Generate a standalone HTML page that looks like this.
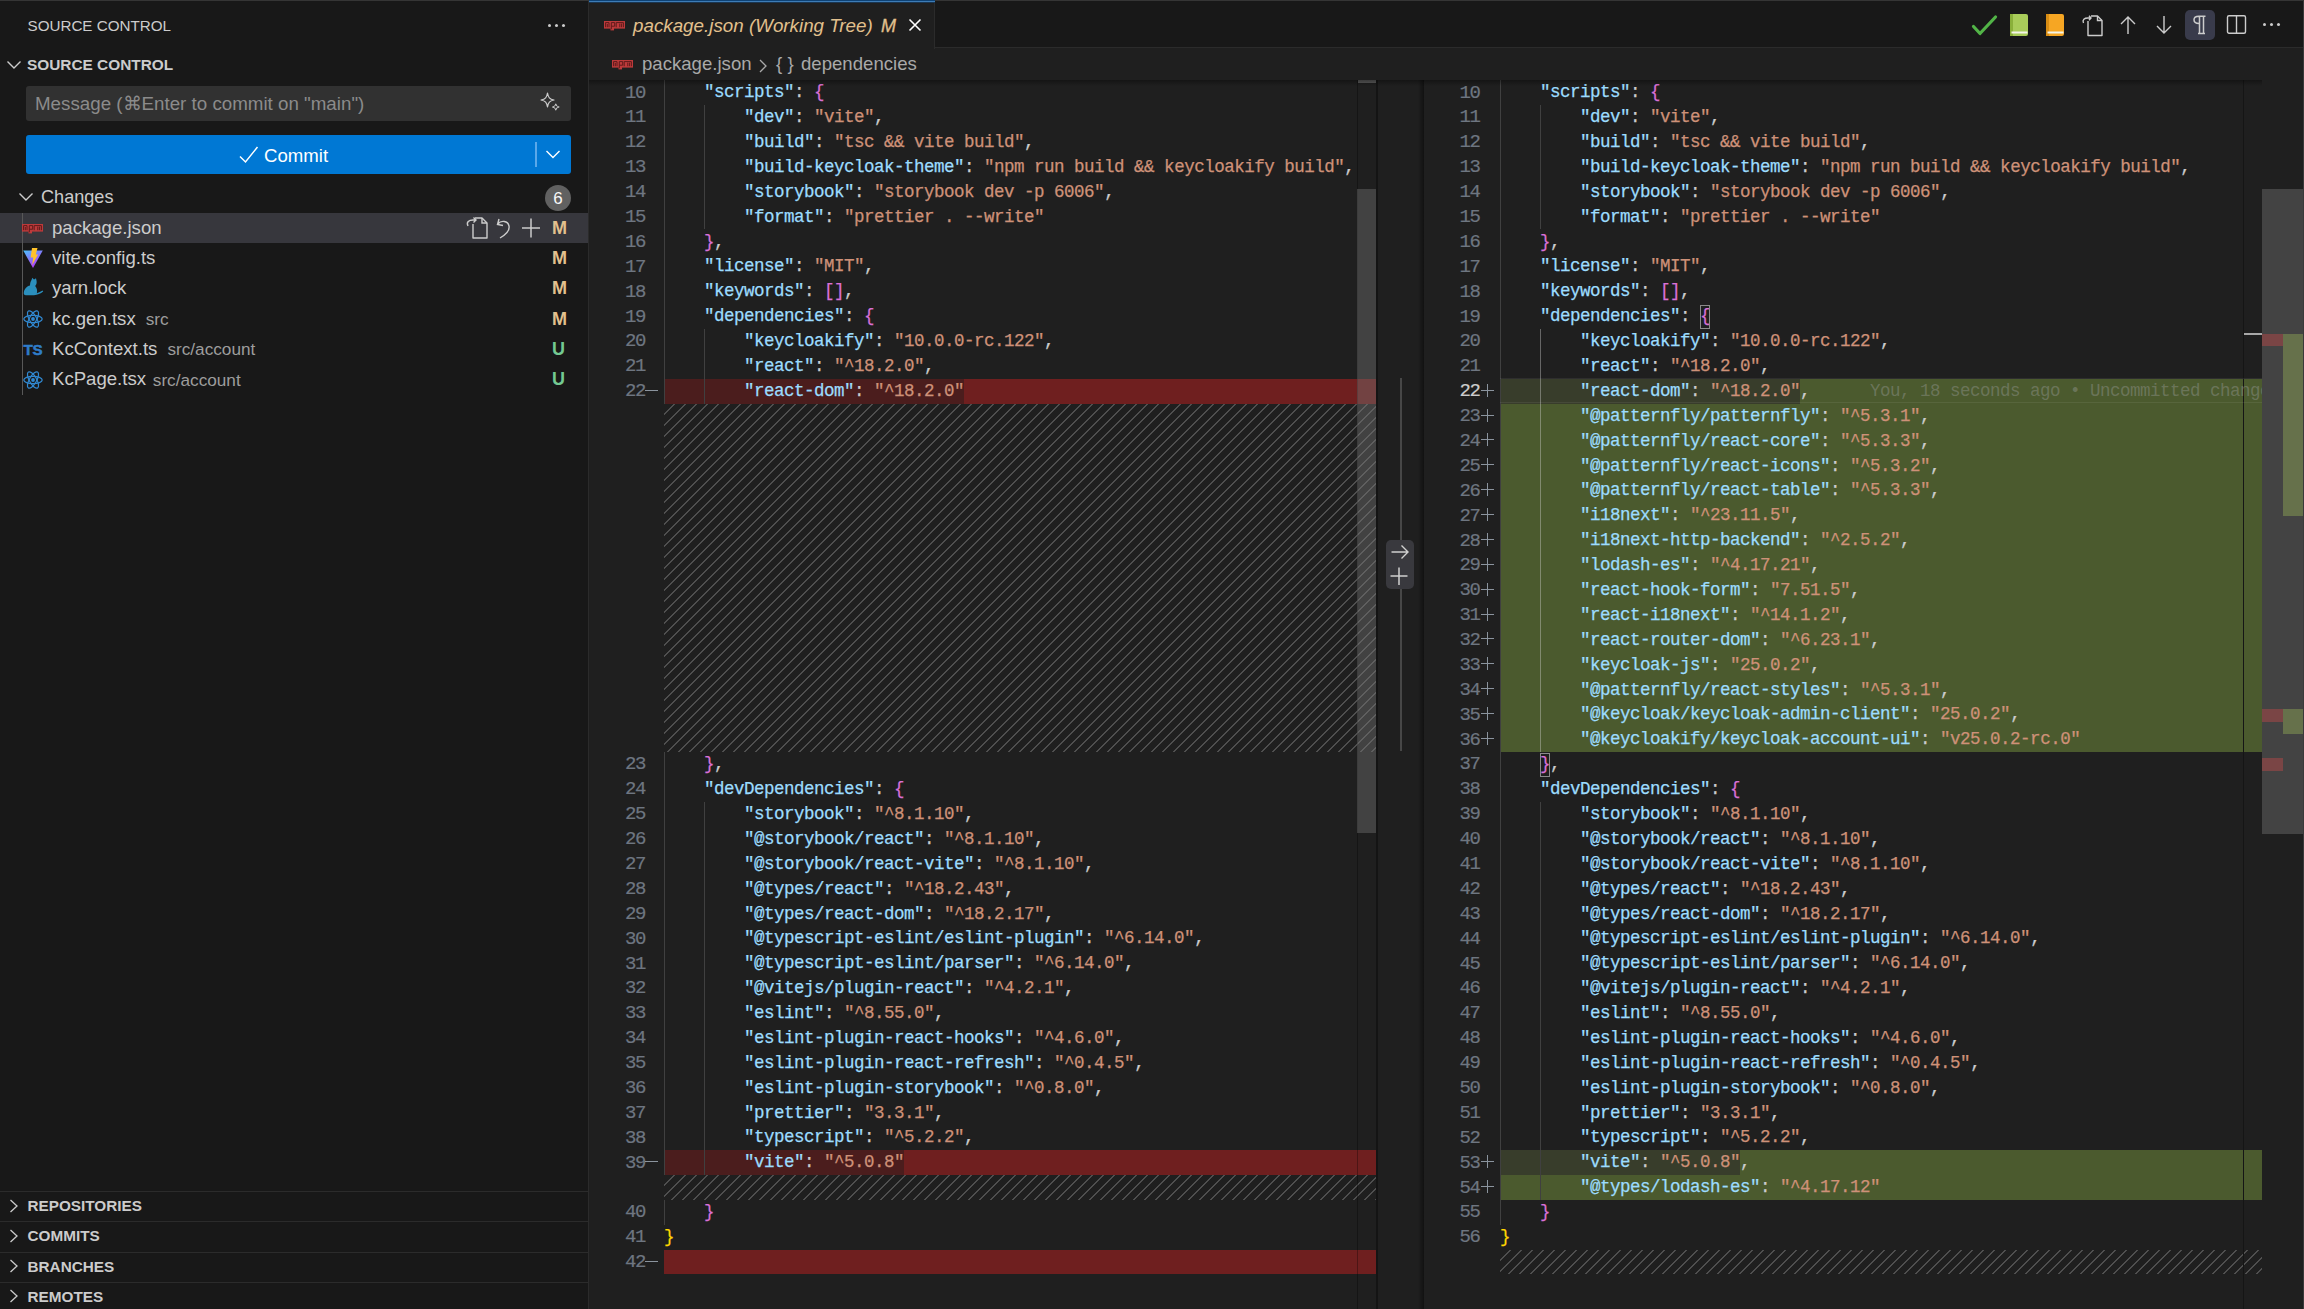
<!DOCTYPE html>
<html><head><meta charset="utf-8">
<style>
*{box-sizing:border-box;margin:0;padding:0}
html,body{width:2304px;height:1309px;overflow:hidden;background:#1f1f1f}
body{position:relative;font-family:"Liberation Sans",sans-serif;color:#cccccc}
.abs{position:absolute}
.t{position:absolute;white-space:pre;line-height:30px}
#side{position:absolute;left:0;top:0;width:588px;height:1309px;background:#181818}
#sideb{position:absolute;left:588px;top:0;width:1px;height:1309px;background:#2b2b2b}
.code{position:absolute;white-space:pre;font-family:"Liberation Mono",monospace;font-size:17.5px;letter-spacing:-0.5px;line-height:24.885px;height:24.885px;padding-top:0.3px;-webkit-text-stroke:0.25px currentColor}
.ln{position:absolute;width:60px;text-align:right;white-space:pre;font-family:"Liberation Mono",monospace;font-size:19px;letter-spacing:-1.4px;line-height:24.885px;padding-top:0.6px;color:#6e7681;-webkit-text-stroke:0.2px currentColor}
.ln.act{color:#cccccc}
.sign{position:absolute;white-space:pre;font-family:"Liberation Mono",monospace;font-size:17.5px;line-height:24.885px;padding-top:1px;color:#6e7681}
.bg{position:absolute}
.guide{position:absolute;width:1px}
.hatch{position:absolute;background-image:linear-gradient(-45deg, rgba(204,204,204,0.28) 9%, transparent 9%, transparent 50%, rgba(204,204,204,0.28) 50%, rgba(204,204,204,0.28) 59%, transparent 59%, transparent 100%);background-size:11px 11px}
.clipL{position:absolute;left:589px;top:80px;width:787px;height:1229px;overflow:hidden}
.clipR{position:absolute;left:1424px;top:80px;width:838px;height:1229px;overflow:hidden}
.inner{position:absolute;top:-80px}
</style></head><body>
<!-- SIDEBAR -->
<div id="side"></div>
<div id="sideb"></div>
<div class="abs" style="left:0;top:0;width:589px;height:1px;background:#353535;z-index:5"></div><div class="abs" style="left:935px;top:0;width:1369px;height:1px;background:#353535;z-index:5"></div>
<div class="t" style="left:27.5px;top:10.5px;font-size:15.2px;color:#cccccc">SOURCE CONTROL</div>
<div class="abs" style="left:548px;top:23.5px;width:3.2px;height:3.2px;border-radius:2px;background:#cccccc;box-shadow:7px 0 0 #cccccc,14px 0 0 #cccccc"></div>
<svg class="abs" style="left:6px;top:59px" width="16" height="12" viewBox="0 0 16 12"><path d="M1.5 2.5 L8 9 L14.5 2.5" fill="none" stroke="#cccccc" stroke-width="1.4"/></svg>
<div class="t" style="left:27px;top:50px;font-size:15.4px;font-weight:bold;color:#cccccc">SOURCE CONTROL</div>
<div class="abs" style="left:26px;top:86px;width:545px;height:35px;background:#313131;border-radius:3px"></div>
<div class="t" style="left:35px;top:89px;font-size:18.75px;color:#8b8b8b">Message (⌘Enter to commit on "main")</div>
<svg class="abs" style="left:538px;top:91px" width="24" height="24" viewBox="0 0 24 24"><path d="M9.5 2 C10.3 6.5 11.5 8 16 9 C11.5 10 10.3 11.5 9.5 16 C8.7 11.5 7.5 10 3 9 C7.5 8 8.7 6.5 9.5 2 Z" fill="none" stroke="#cccccc" stroke-width="1.2" stroke-linejoin="round"/><path d="M17.8 13 C18.2 15 18.8 15.6 21 16 C18.8 16.4 18.2 17 17.8 19 C17.4 17 16.8 16.4 14.6 16 C16.8 15.6 17.4 15 17.8 13 Z" fill="none" stroke="#cccccc" stroke-width="1.1" stroke-linejoin="round"/></svg>
<div class="abs" style="left:26px;top:135px;width:545px;height:39px;background:#0078d4;border-radius:3px"></div>
<svg class="abs" style="left:238px;top:145px" width="22" height="19" viewBox="0 0 22 19"><path d="M2 11.5 L7.5 17 L19.5 2" fill="none" stroke="#ffffff" stroke-width="1.5"/></svg>
<div class="t" style="left:264px;top:140.5px;font-size:18.6px;color:#ffffff">Commit</div>
<div class="abs" style="left:535px;top:142px;width:2px;height:25px;background:#5aa8ea"></div>
<svg class="abs" style="left:545px;top:148px" width="16" height="12" viewBox="0 0 16 12"><path d="M1.5 3 L8 9.5 L14.5 3" fill="none" stroke="#ffffff" stroke-width="1.4"/></svg>
<svg class="abs" style="left:18px;top:191px" width="16" height="12" viewBox="0 0 16 12"><path d="M1.5 2.5 L8 9 L14.5 2.5" fill="none" stroke="#cccccc" stroke-width="1.4"/></svg>
<div class="t" style="left:41px;top:182px;font-size:18.1px;color:#cccccc">Changes</div>
<div class="abs" style="left:545px;top:185px;width:26px;height:26px;border-radius:13px;background:#616161"></div>
<div class="t" style="left:545px;top:184px;width:26px;text-align:center;font-size:17px;color:#f8f8f8">6</div>
<!-- rows -->
<div class="abs" style="left:0;top:213px;width:588px;height:30px;background:#37373d"></div>
<div class="abs" style="left:22px;top:213px;width:1px;height:182px;background:#585858"></div>
<svg class="abs" style="left:22px;top:224px" width="21" height="10" viewBox="0 0 21 10"><rect x="0" y="0" width="21" height="7.6" fill="#bd3a3b"/><rect x="6.5" y="7" width="3.5" height="2.4" fill="#bd3a3b"/><path d="M1.6 6.2 V1.6 H5 V6.2 M3.3 3 V6.2" fill="none" stroke="#5e1b1b" stroke-width="1"/><path d="M7.3 8.3 V1.6 H10.7 V5.2 H7.3" fill="none" stroke="#5e1b1b" stroke-width="1"/><path d="M12.2 6.2 V1.6 H19.4 V6.2 M15.8 2.6 V6.2 M17.6 2.6 V6.2" fill="none" stroke="#5e1b1b" stroke-width="1"/></svg>
<div class="t" style="left:52px;top:212.7px;font-size:18.6px;color:#cccccc">package.json</div>
<div class="t" style="left:552px;top:212.7px;font-size:18px;font-weight:bold;color:#e2c08d">M</div>
<svg class="abs" style="left:22px;top:246px" width="22" height="24" viewBox="0 0 22 24"><defs><linearGradient id="vg" x1="0" y1="0" x2="0.6" y2="1"><stop offset="0" stop-color="#49c3ff"/><stop offset="1" stop-color="#b835f6"/></linearGradient></defs><path d="M1.2 4.5 L20.8 4.5 L11 22 Z" fill="url(#vg)"/><path d="M10 2 L15.5 2 L13.8 8.5 L16 8.5 L10.2 19 L11.2 11.5 L8.6 11.5 Z" fill="#ffc22a"/></svg>
<div class="t" style="left:52px;top:243.0px;font-size:18.6px;color:#cccccc">vite.config.ts</div>
<div class="t" style="left:552px;top:243.0px;font-size:18px;font-weight:bold;color:#e2c08d">M</div>
<svg class="abs" style="left:22px;top:277px" width="22" height="22" viewBox="0 0 22 22"><path d="M9.5 3 L10.3 0.8 L12 2.4 L14 1.2 L14.6 4 C15 6 14.2 8 13.2 9 C15 11 15.6 14 14.8 16.2 C16.8 15.6 18.8 14.6 20.6 13.6 L21.2 14.6 C18.6 16.6 15.6 18 12 18.2 L4 18.2 C2 18.2 1.4 16.6 1.9 15 C2.5 12 5 9.2 8 8.6 C8 6.5 8.5 4.5 9.5 3 Z" fill="#2b8fbd"/></svg>
<div class="t" style="left:52px;top:273.3px;font-size:18.6px;color:#cccccc">yarn.lock</div>
<div class="t" style="left:552px;top:273.3px;font-size:18px;font-weight:bold;color:#e2c08d">M</div>
<svg class="abs" style="left:22px;top:308px" width="22" height="22" viewBox="0 0 22 22"><g fill="none" stroke="#3188d0" stroke-width="1.25"><ellipse cx="11" cy="11" rx="9.2" ry="3.6"/><ellipse cx="11" cy="11" rx="9.2" ry="3.6" transform="rotate(60 11 11)"/><ellipse cx="11" cy="11" rx="9.2" ry="3.6" transform="rotate(120 11 11)"/></g><circle cx="11" cy="11" r="1.9" fill="#3188d0"/></svg>
<div class="t" style="left:52px;top:303.6px;font-size:18.6px;color:#cccccc">kc.gen.tsx</div>
<div class="t" style="left:145.7px;top:304.0px;font-size:17.2px;color:#9d9d9d">src</div>
<div class="t" style="left:552px;top:303.6px;font-size:18px;font-weight:bold;color:#e2c08d">M</div>
<div class="t" style="left:23.5px;top:334.5px;font-size:15.2px;font-weight:bold;color:#2f7cc9;-webkit-text-stroke:0.5px #2f7cc9;letter-spacing:-0.3px">TS</div>
<div class="t" style="left:52px;top:333.9px;font-size:18.6px;color:#cccccc">KcContext.ts</div>
<div class="t" style="left:167.4px;top:334.3px;font-size:17.2px;color:#9d9d9d">src/account</div>
<div class="t" style="left:552px;top:333.9px;font-size:18px;font-weight:bold;color:#73c991">U</div>
<svg class="abs" style="left:22px;top:368.5px" width="22" height="22" viewBox="0 0 22 22"><g fill="none" stroke="#3188d0" stroke-width="1.25"><ellipse cx="11" cy="11" rx="9.2" ry="3.6"/><ellipse cx="11" cy="11" rx="9.2" ry="3.6" transform="rotate(60 11 11)"/><ellipse cx="11" cy="11" rx="9.2" ry="3.6" transform="rotate(120 11 11)"/></g><circle cx="11" cy="11" r="1.9" fill="#3188d0"/></svg>
<div class="t" style="left:52px;top:364.2px;font-size:18.6px;color:#cccccc">KcPage.tsx</div>
<div class="t" style="left:152.8px;top:364.6px;font-size:17.2px;color:#9d9d9d">src/account</div>
<div class="t" style="left:552px;top:364.2px;font-size:18px;font-weight:bold;color:#73c991">U</div>
<svg class="abs" style="left:464px;top:216px" width="26" height="24" viewBox="0 0 26 24"><path d="M9 8 V22 H23 V7 L18 2 H11" fill="none" stroke="#cccccc" stroke-width="1.4" stroke-linejoin="round"/><path d="M18 2 V7 H23" fill="none" stroke="#cccccc" stroke-width="1.4"/><path d="M4 10 C2 6 5 4 9 4 L12 4 M9.5 1.5 L12 4 L9.5 6.5" fill="none" stroke="#cccccc" stroke-width="1.4"/></svg>
<svg class="abs" style="left:495px;top:216px" width="18" height="24" viewBox="0 0 18 24"><path d="M4 3 L2.5 8.5 L8 9.5 M2.8 8 C6 4 13 4.5 14 10 C14.8 14 12 18 5 22" fill="none" stroke="#cccccc" stroke-width="1.4"/></svg>
<svg class="abs" style="left:521px;top:217px" width="20" height="22" viewBox="0 0 20 22"><path d="M10 1.5 V20.5 M1 11 H19" fill="none" stroke="#cccccc" stroke-width="1.5"/></svg>
<!-- bottom sections -->
<div class="abs" style="left:0;top:1191.0px;width:588px;height:1px;background:#2b2b2b"></div>
<svg class="abs" style="left:7px;top:1197.5px" width="14" height="16" viewBox="0 0 14 16"><path d="M3.5 2 L10 8 L3.5 14" fill="none" stroke="#cccccc" stroke-width="1.3"/></svg>
<div class="t" style="left:27.5px;top:1191.2px;font-size:15.3px;font-weight:bold;color:#cccccc">REPOSITORIES</div>
<div class="abs" style="left:0;top:1221.2px;width:588px;height:1px;background:#2b2b2b"></div>
<svg class="abs" style="left:7px;top:1227.8px" width="14" height="16" viewBox="0 0 14 16"><path d="M3.5 2 L10 8 L3.5 14" fill="none" stroke="#cccccc" stroke-width="1.3"/></svg>
<div class="t" style="left:27.5px;top:1221.4px;font-size:15.3px;font-weight:bold;color:#cccccc">COMMITS</div>
<div class="abs" style="left:0;top:1251.5px;width:588px;height:1px;background:#2b2b2b"></div>
<svg class="abs" style="left:7px;top:1258.0px" width="14" height="16" viewBox="0 0 14 16"><path d="M3.5 2 L10 8 L3.5 14" fill="none" stroke="#cccccc" stroke-width="1.3"/></svg>
<div class="t" style="left:27.5px;top:1251.7px;font-size:15.3px;font-weight:bold;color:#cccccc">BRANCHES</div>
<div class="abs" style="left:0;top:1281.8px;width:588px;height:1px;background:#2b2b2b"></div>
<svg class="abs" style="left:7px;top:1288.2px" width="14" height="16" viewBox="0 0 14 16"><path d="M3.5 2 L10 8 L3.5 14" fill="none" stroke="#cccccc" stroke-width="1.3"/></svg>
<div class="t" style="left:27.5px;top:1281.9px;font-size:15.3px;font-weight:bold;color:#cccccc">REMOTES</div>

<!-- EDITOR GROUP -->
<div class="abs" style="left:589px;top:0;width:1715px;height:48px;background:#181818;border-bottom:1px solid #2b2b2b"></div>
<div class="abs" style="left:589px;top:0;width:346px;height:49px;background:#1f1f1f;border-right:1px solid #2b2b2b"></div>
<div class="abs" style="left:589px;top:0;width:346px;height:3px;background:linear-gradient(#0e4275 0px,#0e4275 1px,#3d7cb6 1px,#3d7cb6 2px,#1a3550 2px,#1a3550 3px)"></div>
<svg class="abs" style="left:604px;top:20.5px" width="21" height="10" viewBox="0 0 21 10"><rect x="0" y="0" width="21" height="7.6" fill="#bd3a3b"/><rect x="6.5" y="7" width="3.5" height="2.4" fill="#bd3a3b"/><path d="M1.6 6.2 V1.6 H5 V6.2 M3.3 3 V6.2" fill="none" stroke="#5e1b1b" stroke-width="1"/><path d="M7.3 8.3 V1.6 H10.7 V5.2 H7.3" fill="none" stroke="#5e1b1b" stroke-width="1"/><path d="M12.2 6.2 V1.6 H19.4 V6.2 M15.8 2.6 V6.2 M17.6 2.6 V6.2" fill="none" stroke="#5e1b1b" stroke-width="1"/></svg>
<div class="t" style="left:633px;top:11px;font-size:18.8px;font-style:italic;color:#e2c08d">package.json (Working Tree)</div>
<div class="t" style="left:881px;top:11px;font-size:18px;font-style:italic;color:#e2c08d;-webkit-text-stroke:0.3px #e2c08d">M</div>
<svg class="abs" style="left:907px;top:17px" width="16" height="16" viewBox="0 0 16 16"><path d="M2.5 2.5 L13.5 13.5 M13.5 2.5 L2.5 13.5" stroke="#ffffff" stroke-width="1.6"/></svg>
<svg class="abs" style="left:1971px;top:14px" width="27" height="23" viewBox="0 0 27 23"><path d="M2.5 12.5 L9 19.5 L24.5 3" fill="none" stroke="#52b447" stroke-width="3.2" stroke-linecap="round" stroke-linejoin="round"/></svg>
<svg class="abs" style="left:2009px;top:13px" width="20" height="24" viewBox="0 0 20 24"><rect x="1" y="1" width="18" height="22" rx="2" fill="#a9cc5a"/><rect x="1" y="1" width="3" height="22" fill="#8ab03a"/><rect x="2.5" y="18.5" width="16" height="2" fill="#f4f4e8"/></svg>
<svg class="abs" style="left:2045px;top:13px" width="20" height="24" viewBox="0 0 20 24"><rect x="1" y="1" width="18" height="22" rx="2" fill="#f6a623"/><rect x="1" y="1" width="3" height="22" fill="#d88d14"/><rect x="2.5" y="18.5" width="16" height="2" fill="#f4f4e8"/></svg>
<svg class="abs" style="left:2081px;top:14px" width="24" height="23" viewBox="0 0 24 23"><path d="M7 7 V21.5 H21 V6.5 L16.5 2 H10" fill="none" stroke="#cccccc" stroke-width="1.4" stroke-linejoin="round"/><path d="M16.5 2 V6.5 H21" fill="none" stroke="#cccccc" stroke-width="1.4"/><path d="M2.5 9 C1 5.5 3.5 4 7 4 L10 4 M8 1.8 L10 4 L8 6.2" fill="none" stroke="#cccccc" stroke-width="1.4"/></svg>
<svg class="abs" style="left:2119px;top:15px" width="18" height="20" viewBox="0 0 18 20"><path d="M9 19 V2 M2 9 L9 2 L16 9" fill="none" stroke="#cccccc" stroke-width="1.4"/></svg>
<svg class="abs" style="left:2155px;top:15px" width="18" height="20" viewBox="0 0 18 20"><path d="M9 1 V18 M2 11 L9 18 L16 11" fill="none" stroke="#cccccc" stroke-width="1.4"/></svg>
<div class="abs" style="left:2185px;top:10px;width:30px;height:30px;border-radius:5px;background:#393b4b"></div>
<svg class="abs" style="left:2190px;top:14px" width="20" height="22" viewBox="0 0 20 22"><path d="M9 9.5 C5.5 9.5 4 8 4 5.8 C4 3.5 5.5 2.2 9 2.2 H15.5 M9.5 2.2 V19.5 M13.5 2.2 V19.5 M8 19.5 H15" fill="none" stroke="#cccccc" stroke-width="1.5"/></svg>
<svg class="abs" style="left:2226px;top:14px" width="21" height="21" viewBox="0 0 21 21"><rect x="1.5" y="1.8" width="18" height="17.5" rx="1.5" fill="none" stroke="#cccccc" stroke-width="1.4"/><path d="M10.5 1.8 V19.3" stroke="#cccccc" stroke-width="1.4"/></svg>
<div class="abs" style="left:2263px;top:23px;width:3.4px;height:3.4px;border-radius:2px;background:#cccccc;box-shadow:7px 0 0 #cccccc,14px 0 0 #cccccc"></div>
<!-- breadcrumbs -->
<div class="abs" style="left:589px;top:49px;width:1715px;height:31px;background:#1f1f1f"></div>
<svg class="abs" style="left:612px;top:60px" width="21" height="10" viewBox="0 0 21 10"><rect x="0" y="0" width="21" height="7.6" fill="#bd3a3b"/><rect x="6.5" y="7" width="3.5" height="2.4" fill="#bd3a3b"/><path d="M1.6 6.2 V1.6 H5 V6.2 M3.3 3 V6.2" fill="none" stroke="#5e1b1b" stroke-width="1"/><path d="M7.3 8.3 V1.6 H10.7 V5.2 H7.3" fill="none" stroke="#5e1b1b" stroke-width="1"/><path d="M12.2 6.2 V1.6 H19.4 V6.2 M15.8 2.6 V6.2 M17.6 2.6 V6.2" fill="none" stroke="#5e1b1b" stroke-width="1"/></svg>
<div class="t" style="left:642px;top:49px;font-size:18.6px;color:#a9a9a9">package.json</div>
<svg class="abs" style="left:757px;top:58px" width="12" height="16" viewBox="0 0 12 16"><path d="M3 2 L9 8 L3 14" fill="none" stroke="#a9a9a9" stroke-width="1.3"/></svg>
<div class="t" style="left:776px;top:49px;font-size:18.6px;color:#a9a9a9">{ }</div>
<div class="t" style="left:801px;top:49px;font-size:18.6px;color:#a9a9a9">dependencies</div>

<!-- LEFT EDITOR -->
<div class="clipL"><div class="inner" style="left:-589px">
<div class="bg" style="left:664px;top:379px;width:712px;height:25px;background:#6f1f1f"></div>
<div class="bg" style="left:664px;top:379px;width:300.0px;height:25px;background:#4b1d1d"></div>
<div class="hatch" style="left:664px;top:404px;width:712px;height:348px"></div>
<div class="bg" style="left:664px;top:1150px;width:712px;height:25px;background:#6f1f1f"></div>
<div class="bg" style="left:664px;top:1150px;width:240.0px;height:25px;background:#4b1d1d"></div>
<div class="hatch" style="left:664px;top:1175px;width:712px;height:25px"></div>
<div class="bg" style="left:664px;top:1250px;width:712px;height:24px;background:#6f1f1f"></div>
<div class="ln" style="left:585px;top:80.00px">10</div>
<div class="code" style="left:664px;top:80.00px">    <span style="color:#9cdcfe">&quot;scripts&quot;</span><span style="color:#cccccc">:</span> <span style="color:#da70d6">{</span></div>
<div class="ln" style="left:585px;top:104.89px">11</div>
<div class="code" style="left:664px;top:104.89px">        <span style="color:#9cdcfe">&quot;dev&quot;</span><span style="color:#cccccc">:</span> <span style="color:#ce9178">&quot;vite&quot;</span><span style="color:#cccccc">,</span></div>
<div class="ln" style="left:585px;top:129.77px">12</div>
<div class="code" style="left:664px;top:129.77px">        <span style="color:#9cdcfe">&quot;build&quot;</span><span style="color:#cccccc">:</span> <span style="color:#ce9178">&quot;tsc &amp;&amp; vite build&quot;</span><span style="color:#cccccc">,</span></div>
<div class="ln" style="left:585px;top:154.66px">13</div>
<div class="code" style="left:664px;top:154.66px">        <span style="color:#9cdcfe">&quot;build-keycloak-theme&quot;</span><span style="color:#cccccc">:</span> <span style="color:#ce9178">&quot;npm run build &amp;&amp; keycloakify build&quot;</span><span style="color:#cccccc">,</span></div>
<div class="ln" style="left:585px;top:179.54px">14</div>
<div class="code" style="left:664px;top:179.54px">        <span style="color:#9cdcfe">&quot;storybook&quot;</span><span style="color:#cccccc">:</span> <span style="color:#ce9178">&quot;storybook dev -p 6006&quot;</span><span style="color:#cccccc">,</span></div>
<div class="ln" style="left:585px;top:204.43px">15</div>
<div class="code" style="left:664px;top:204.43px">        <span style="color:#9cdcfe">&quot;format&quot;</span><span style="color:#cccccc">:</span> <span style="color:#ce9178">&quot;prettier . --write&quot;</span></div>
<div class="ln" style="left:585px;top:229.31px">16</div>
<div class="code" style="left:664px;top:229.31px">    <span style="color:#da70d6">}</span><span style="color:#cccccc">,</span></div>
<div class="ln" style="left:585px;top:254.20px">17</div>
<div class="code" style="left:664px;top:254.20px">    <span style="color:#9cdcfe">&quot;license&quot;</span><span style="color:#cccccc">:</span> <span style="color:#ce9178">&quot;MIT&quot;</span><span style="color:#cccccc">,</span></div>
<div class="ln" style="left:585px;top:279.08px">18</div>
<div class="code" style="left:664px;top:279.08px">    <span style="color:#9cdcfe">&quot;keywords&quot;</span><span style="color:#cccccc">:</span> <span style="color:#da70d6">[</span><span style="color:#da70d6">]</span><span style="color:#cccccc">,</span></div>
<div class="ln" style="left:585px;top:303.97px">19</div>
<div class="code" style="left:664px;top:303.97px">    <span style="color:#9cdcfe">&quot;dependencies&quot;</span><span style="color:#cccccc">:</span> <span style="color:#da70d6">{</span></div>
<div class="ln" style="left:585px;top:328.85px">20</div>
<div class="code" style="left:664px;top:328.85px">        <span style="color:#9cdcfe">&quot;keycloakify&quot;</span><span style="color:#cccccc">:</span> <span style="color:#ce9178">&quot;10.0.0-rc.122&quot;</span><span style="color:#cccccc">,</span></div>
<div class="ln" style="left:585px;top:353.74px">21</div>
<div class="code" style="left:664px;top:353.74px">        <span style="color:#9cdcfe">&quot;react&quot;</span><span style="color:#cccccc">:</span> <span style="color:#ce9178">&quot;^18.2.0&quot;</span><span style="color:#cccccc">,</span></div>
<div class="ln" style="left:585px;top:378.62px">22</div>
<div class="bg" style="left:645px;top:390px;width:13px;height:1.4px;background:#8b949e"></div>
<div class="code" style="left:664px;top:378.62px">        <span style="color:#9cdcfe">&quot;react-dom&quot;</span><span style="color:#cccccc">:</span> <span style="color:#ce9178">&quot;^18.2.0&quot;</span></div>
<div class="ln" style="left:585px;top:751.90px">23</div>
<div class="code" style="left:664px;top:751.90px">    <span style="color:#da70d6">}</span><span style="color:#cccccc">,</span></div>
<div class="ln" style="left:585px;top:776.78px">24</div>
<div class="code" style="left:664px;top:776.78px">    <span style="color:#9cdcfe">&quot;devDependencies&quot;</span><span style="color:#cccccc">:</span> <span style="color:#da70d6">{</span></div>
<div class="ln" style="left:585px;top:801.67px">25</div>
<div class="code" style="left:664px;top:801.67px">        <span style="color:#9cdcfe">&quot;storybook&quot;</span><span style="color:#cccccc">:</span> <span style="color:#ce9178">&quot;^8.1.10&quot;</span><span style="color:#cccccc">,</span></div>
<div class="ln" style="left:585px;top:826.55px">26</div>
<div class="code" style="left:664px;top:826.55px">        <span style="color:#9cdcfe">&quot;@storybook/react&quot;</span><span style="color:#cccccc">:</span> <span style="color:#ce9178">&quot;^8.1.10&quot;</span><span style="color:#cccccc">,</span></div>
<div class="ln" style="left:585px;top:851.44px">27</div>
<div class="code" style="left:664px;top:851.44px">        <span style="color:#9cdcfe">&quot;@storybook/react-vite&quot;</span><span style="color:#cccccc">:</span> <span style="color:#ce9178">&quot;^8.1.10&quot;</span><span style="color:#cccccc">,</span></div>
<div class="ln" style="left:585px;top:876.32px">28</div>
<div class="code" style="left:664px;top:876.32px">        <span style="color:#9cdcfe">&quot;@types/react&quot;</span><span style="color:#cccccc">:</span> <span style="color:#ce9178">&quot;^18.2.43&quot;</span><span style="color:#cccccc">,</span></div>
<div class="ln" style="left:585px;top:901.21px">29</div>
<div class="code" style="left:664px;top:901.21px">        <span style="color:#9cdcfe">&quot;@types/react-dom&quot;</span><span style="color:#cccccc">:</span> <span style="color:#ce9178">&quot;^18.2.17&quot;</span><span style="color:#cccccc">,</span></div>
<div class="ln" style="left:585px;top:926.09px">30</div>
<div class="code" style="left:664px;top:926.09px">        <span style="color:#9cdcfe">&quot;@typescript-eslint/eslint-plugin&quot;</span><span style="color:#cccccc">:</span> <span style="color:#ce9178">&quot;^6.14.0&quot;</span><span style="color:#cccccc">,</span></div>
<div class="ln" style="left:585px;top:950.98px">31</div>
<div class="code" style="left:664px;top:950.98px">        <span style="color:#9cdcfe">&quot;@typescript-eslint/parser&quot;</span><span style="color:#cccccc">:</span> <span style="color:#ce9178">&quot;^6.14.0&quot;</span><span style="color:#cccccc">,</span></div>
<div class="ln" style="left:585px;top:975.86px">32</div>
<div class="code" style="left:664px;top:975.86px">        <span style="color:#9cdcfe">&quot;@vitejs/plugin-react&quot;</span><span style="color:#cccccc">:</span> <span style="color:#ce9178">&quot;^4.2.1&quot;</span><span style="color:#cccccc">,</span></div>
<div class="ln" style="left:585px;top:1000.75px">33</div>
<div class="code" style="left:664px;top:1000.75px">        <span style="color:#9cdcfe">&quot;eslint&quot;</span><span style="color:#cccccc">:</span> <span style="color:#ce9178">&quot;^8.55.0&quot;</span><span style="color:#cccccc">,</span></div>
<div class="ln" style="left:585px;top:1025.63px">34</div>
<div class="code" style="left:664px;top:1025.63px">        <span style="color:#9cdcfe">&quot;eslint-plugin-react-hooks&quot;</span><span style="color:#cccccc">:</span> <span style="color:#ce9178">&quot;^4.6.0&quot;</span><span style="color:#cccccc">,</span></div>
<div class="ln" style="left:585px;top:1050.52px">35</div>
<div class="code" style="left:664px;top:1050.52px">        <span style="color:#9cdcfe">&quot;eslint-plugin-react-refresh&quot;</span><span style="color:#cccccc">:</span> <span style="color:#ce9178">&quot;^0.4.5&quot;</span><span style="color:#cccccc">,</span></div>
<div class="ln" style="left:585px;top:1075.40px">36</div>
<div class="code" style="left:664px;top:1075.40px">        <span style="color:#9cdcfe">&quot;eslint-plugin-storybook&quot;</span><span style="color:#cccccc">:</span> <span style="color:#ce9178">&quot;^0.8.0&quot;</span><span style="color:#cccccc">,</span></div>
<div class="ln" style="left:585px;top:1100.29px">37</div>
<div class="code" style="left:664px;top:1100.29px">        <span style="color:#9cdcfe">&quot;prettier&quot;</span><span style="color:#cccccc">:</span> <span style="color:#ce9178">&quot;3.3.1&quot;</span><span style="color:#cccccc">,</span></div>
<div class="ln" style="left:585px;top:1125.17px">38</div>
<div class="code" style="left:664px;top:1125.17px">        <span style="color:#9cdcfe">&quot;typescript&quot;</span><span style="color:#cccccc">:</span> <span style="color:#ce9178">&quot;^5.2.2&quot;</span><span style="color:#cccccc">,</span></div>
<div class="ln" style="left:585px;top:1150.06px">39</div>
<div class="bg" style="left:645px;top:1161px;width:13px;height:1.4px;background:#8b949e"></div>
<div class="code" style="left:664px;top:1150.06px">        <span style="color:#9cdcfe">&quot;vite&quot;</span><span style="color:#cccccc">:</span> <span style="color:#ce9178">&quot;^5.0.8&quot;</span></div>
<div class="ln" style="left:585px;top:1199.83px">40</div>
<div class="code" style="left:664px;top:1199.83px">    <span style="color:#da70d6">}</span></div>
<div class="ln" style="left:585px;top:1224.71px">41</div>
<div class="code" style="left:664px;top:1224.71px"><span style="color:#ffd700">}</span></div>
<div class="ln" style="left:585px;top:1249.60px">42</div>
<div class="bg" style="left:645px;top:1261px;width:13px;height:1.4px;background:#8b949e"></div>
<div class="guide" style="left:664.0px;top:80.00px;height:323.50px;background:#404040"></div>
<div class="guide" style="left:664.0px;top:751.90px;height:423.05px;background:#404040"></div>
<div class="guide" style="left:664.0px;top:1199.83px;height:24.89px;background:#404040"></div>
<div class="guide" style="left:704.0px;top:104.89px;height:124.43px;background:#404040"></div>
<div class="guide" style="left:704.0px;top:328.85px;height:74.66px;background:#404040"></div>
<div class="guide" style="left:704.0px;top:801.67px;height:373.28px;background:#404040"></div>
</div></div>
<!-- RIGHT EDITOR -->
<div class="clipR"><div class="inner" style="left:-1424px">
<div class="bg" style="left:1500px;top:379px;width:762px;height:25px;background:#4b5a2e"></div>
<div class="bg" style="left:1500px;top:379px;width:300.0px;height:25px;background:#383d2b"></div>
<div class="bg" style="left:1500px;top:404px;width:762px;height:348px;background:#4b5a2e"></div>
<div class="bg" style="left:1500px;top:1150px;width:762px;height:25px;background:#4b5a2e"></div>
<div class="bg" style="left:1500px;top:1150px;width:240.0px;height:25px;background:#383d2b"></div>
<div class="bg" style="left:1500px;top:1175px;width:762px;height:25px;background:#4b5a2e"></div>
<div class="hatch" style="left:1500px;top:1250px;width:762px;height:24px"></div>
<div class="ln" style="left:1419.5px;top:80.00px">10</div>
<div class="code" style="left:1500px;top:80.00px">    <span style="color:#9cdcfe">&quot;scripts&quot;</span><span style="color:#cccccc">:</span> <span style="color:#da70d6">{</span></div>
<div class="ln" style="left:1419.5px;top:104.89px">11</div>
<div class="code" style="left:1500px;top:104.89px">        <span style="color:#9cdcfe">&quot;dev&quot;</span><span style="color:#cccccc">:</span> <span style="color:#ce9178">&quot;vite&quot;</span><span style="color:#cccccc">,</span></div>
<div class="ln" style="left:1419.5px;top:129.77px">12</div>
<div class="code" style="left:1500px;top:129.77px">        <span style="color:#9cdcfe">&quot;build&quot;</span><span style="color:#cccccc">:</span> <span style="color:#ce9178">&quot;tsc &amp;&amp; vite build&quot;</span><span style="color:#cccccc">,</span></div>
<div class="ln" style="left:1419.5px;top:154.66px">13</div>
<div class="code" style="left:1500px;top:154.66px">        <span style="color:#9cdcfe">&quot;build-keycloak-theme&quot;</span><span style="color:#cccccc">:</span> <span style="color:#ce9178">&quot;npm run build &amp;&amp; keycloakify build&quot;</span><span style="color:#cccccc">,</span></div>
<div class="ln" style="left:1419.5px;top:179.54px">14</div>
<div class="code" style="left:1500px;top:179.54px">        <span style="color:#9cdcfe">&quot;storybook&quot;</span><span style="color:#cccccc">:</span> <span style="color:#ce9178">&quot;storybook dev -p 6006&quot;</span><span style="color:#cccccc">,</span></div>
<div class="ln" style="left:1419.5px;top:204.43px">15</div>
<div class="code" style="left:1500px;top:204.43px">        <span style="color:#9cdcfe">&quot;format&quot;</span><span style="color:#cccccc">:</span> <span style="color:#ce9178">&quot;prettier . --write&quot;</span></div>
<div class="ln" style="left:1419.5px;top:229.31px">16</div>
<div class="code" style="left:1500px;top:229.31px">    <span style="color:#da70d6">}</span><span style="color:#cccccc">,</span></div>
<div class="ln" style="left:1419.5px;top:254.20px">17</div>
<div class="code" style="left:1500px;top:254.20px">    <span style="color:#9cdcfe">&quot;license&quot;</span><span style="color:#cccccc">:</span> <span style="color:#ce9178">&quot;MIT&quot;</span><span style="color:#cccccc">,</span></div>
<div class="ln" style="left:1419.5px;top:279.08px">18</div>
<div class="code" style="left:1500px;top:279.08px">    <span style="color:#9cdcfe">&quot;keywords&quot;</span><span style="color:#cccccc">:</span> <span style="color:#da70d6">[</span><span style="color:#da70d6">]</span><span style="color:#cccccc">,</span></div>
<div class="ln" style="left:1419.5px;top:303.97px">19</div>
<div class="code" style="left:1500px;top:303.97px">    <span style="color:#9cdcfe">&quot;dependencies&quot;</span><span style="color:#cccccc">:</span> <span style="color:#da70d6">{</span></div>
<div class="ln" style="left:1419.5px;top:328.85px">20</div>
<div class="code" style="left:1500px;top:328.85px">        <span style="color:#9cdcfe">&quot;keycloakify&quot;</span><span style="color:#cccccc">:</span> <span style="color:#ce9178">&quot;10.0.0-rc.122&quot;</span><span style="color:#cccccc">,</span></div>
<div class="ln" style="left:1419.5px;top:353.74px">21</div>
<div class="code" style="left:1500px;top:353.74px">        <span style="color:#9cdcfe">&quot;react&quot;</span><span style="color:#cccccc">:</span> <span style="color:#ce9178">&quot;^18.2.0&quot;</span><span style="color:#cccccc">,</span></div>
<div class="ln act" style="left:1419.5px;top:378.62px">22</div>
<div class="bg" style="left:1481px;top:390px;width:13px;height:1.4px;background:#8b949e"></div>
<div class="bg" style="left:1486.8px;top:384px;width:1.4px;height:13px;background:#8b949e"></div>
<div class="code" style="left:1500px;top:378.62px">        <span style="color:#9cdcfe">&quot;react-dom&quot;</span><span style="color:#cccccc">:</span> <span style="color:#ce9178">&quot;^18.2.0&quot;</span><span style="color:#cccccc">,</span></div>
<div class="ln" style="left:1419.5px;top:403.50px">23</div>
<div class="bg" style="left:1481px;top:415px;width:13px;height:1.4px;background:#8b949e"></div>
<div class="bg" style="left:1486.8px;top:409px;width:1.4px;height:13px;background:#8b949e"></div>
<div class="code" style="left:1500px;top:403.50px">        <span style="color:#9cdcfe">&quot;@patternfly/patternfly&quot;</span><span style="color:#cccccc">:</span> <span style="color:#ce9178">&quot;^5.3.1&quot;</span><span style="color:#cccccc">,</span></div>
<div class="ln" style="left:1419.5px;top:428.39px">24</div>
<div class="bg" style="left:1481px;top:439px;width:13px;height:1.4px;background:#8b949e"></div>
<div class="bg" style="left:1486.8px;top:433px;width:1.4px;height:13px;background:#8b949e"></div>
<div class="code" style="left:1500px;top:428.39px">        <span style="color:#9cdcfe">&quot;@patternfly/react-core&quot;</span><span style="color:#cccccc">:</span> <span style="color:#ce9178">&quot;^5.3.3&quot;</span><span style="color:#cccccc">,</span></div>
<div class="ln" style="left:1419.5px;top:453.28px">25</div>
<div class="bg" style="left:1481px;top:464px;width:13px;height:1.4px;background:#8b949e"></div>
<div class="bg" style="left:1486.8px;top:458px;width:1.4px;height:13px;background:#8b949e"></div>
<div class="code" style="left:1500px;top:453.28px">        <span style="color:#9cdcfe">&quot;@patternfly/react-icons&quot;</span><span style="color:#cccccc">:</span> <span style="color:#ce9178">&quot;^5.3.2&quot;</span><span style="color:#cccccc">,</span></div>
<div class="ln" style="left:1419.5px;top:478.16px">26</div>
<div class="bg" style="left:1481px;top:489px;width:13px;height:1.4px;background:#8b949e"></div>
<div class="bg" style="left:1486.8px;top:483px;width:1.4px;height:13px;background:#8b949e"></div>
<div class="code" style="left:1500px;top:478.16px">        <span style="color:#9cdcfe">&quot;@patternfly/react-table&quot;</span><span style="color:#cccccc">:</span> <span style="color:#ce9178">&quot;^5.3.3&quot;</span><span style="color:#cccccc">,</span></div>
<div class="ln" style="left:1419.5px;top:503.05px">27</div>
<div class="bg" style="left:1481px;top:514px;width:13px;height:1.4px;background:#8b949e"></div>
<div class="bg" style="left:1486.8px;top:508px;width:1.4px;height:13px;background:#8b949e"></div>
<div class="code" style="left:1500px;top:503.05px">        <span style="color:#9cdcfe">&quot;i18next&quot;</span><span style="color:#cccccc">:</span> <span style="color:#ce9178">&quot;^23.11.5&quot;</span><span style="color:#cccccc">,</span></div>
<div class="ln" style="left:1419.5px;top:527.93px">28</div>
<div class="bg" style="left:1481px;top:539px;width:13px;height:1.4px;background:#8b949e"></div>
<div class="bg" style="left:1486.8px;top:533px;width:1.4px;height:13px;background:#8b949e"></div>
<div class="code" style="left:1500px;top:527.93px">        <span style="color:#9cdcfe">&quot;i18next-http-backend&quot;</span><span style="color:#cccccc">:</span> <span style="color:#ce9178">&quot;^2.5.2&quot;</span><span style="color:#cccccc">,</span></div>
<div class="ln" style="left:1419.5px;top:552.82px">29</div>
<div class="bg" style="left:1481px;top:564px;width:13px;height:1.4px;background:#8b949e"></div>
<div class="bg" style="left:1486.8px;top:558px;width:1.4px;height:13px;background:#8b949e"></div>
<div class="code" style="left:1500px;top:552.82px">        <span style="color:#9cdcfe">&quot;lodash-es&quot;</span><span style="color:#cccccc">:</span> <span style="color:#ce9178">&quot;^4.17.21&quot;</span><span style="color:#cccccc">,</span></div>
<div class="ln" style="left:1419.5px;top:577.70px">30</div>
<div class="bg" style="left:1481px;top:589px;width:13px;height:1.4px;background:#8b949e"></div>
<div class="bg" style="left:1486.8px;top:583px;width:1.4px;height:13px;background:#8b949e"></div>
<div class="code" style="left:1500px;top:577.70px">        <span style="color:#9cdcfe">&quot;react-hook-form&quot;</span><span style="color:#cccccc">:</span> <span style="color:#ce9178">&quot;7.51.5&quot;</span><span style="color:#cccccc">,</span></div>
<div class="ln" style="left:1419.5px;top:602.59px">31</div>
<div class="bg" style="left:1481px;top:614px;width:13px;height:1.4px;background:#8b949e"></div>
<div class="bg" style="left:1486.8px;top:608px;width:1.4px;height:13px;background:#8b949e"></div>
<div class="code" style="left:1500px;top:602.59px">        <span style="color:#9cdcfe">&quot;react-i18next&quot;</span><span style="color:#cccccc">:</span> <span style="color:#ce9178">&quot;^14.1.2&quot;</span><span style="color:#cccccc">,</span></div>
<div class="ln" style="left:1419.5px;top:627.47px">32</div>
<div class="bg" style="left:1481px;top:638px;width:13px;height:1.4px;background:#8b949e"></div>
<div class="bg" style="left:1486.8px;top:632px;width:1.4px;height:13px;background:#8b949e"></div>
<div class="code" style="left:1500px;top:627.47px">        <span style="color:#9cdcfe">&quot;react-router-dom&quot;</span><span style="color:#cccccc">:</span> <span style="color:#ce9178">&quot;^6.23.1&quot;</span><span style="color:#cccccc">,</span></div>
<div class="ln" style="left:1419.5px;top:652.36px">33</div>
<div class="bg" style="left:1481px;top:663px;width:13px;height:1.4px;background:#8b949e"></div>
<div class="bg" style="left:1486.8px;top:657px;width:1.4px;height:13px;background:#8b949e"></div>
<div class="code" style="left:1500px;top:652.36px">        <span style="color:#9cdcfe">&quot;keycloak-js&quot;</span><span style="color:#cccccc">:</span> <span style="color:#ce9178">&quot;25.0.2&quot;</span><span style="color:#cccccc">,</span></div>
<div class="ln" style="left:1419.5px;top:677.24px">34</div>
<div class="bg" style="left:1481px;top:688px;width:13px;height:1.4px;background:#8b949e"></div>
<div class="bg" style="left:1486.8px;top:682px;width:1.4px;height:13px;background:#8b949e"></div>
<div class="code" style="left:1500px;top:677.24px">        <span style="color:#9cdcfe">&quot;@patternfly/react-styles&quot;</span><span style="color:#cccccc">:</span> <span style="color:#ce9178">&quot;^5.3.1&quot;</span><span style="color:#cccccc">,</span></div>
<div class="ln" style="left:1419.5px;top:702.12px">35</div>
<div class="bg" style="left:1481px;top:713px;width:13px;height:1.4px;background:#8b949e"></div>
<div class="bg" style="left:1486.8px;top:707px;width:1.4px;height:13px;background:#8b949e"></div>
<div class="code" style="left:1500px;top:702.12px">        <span style="color:#9cdcfe">&quot;@keycloak/keycloak-admin-client&quot;</span><span style="color:#cccccc">:</span> <span style="color:#ce9178">&quot;25.0.2&quot;</span><span style="color:#cccccc">,</span></div>
<div class="ln" style="left:1419.5px;top:727.01px">36</div>
<div class="bg" style="left:1481px;top:738px;width:13px;height:1.4px;background:#8b949e"></div>
<div class="bg" style="left:1486.8px;top:732px;width:1.4px;height:13px;background:#8b949e"></div>
<div class="code" style="left:1500px;top:727.01px">        <span style="color:#9cdcfe">&quot;@keycloakify/keycloak-account-ui&quot;</span><span style="color:#cccccc">:</span> <span style="color:#ce9178">&quot;v25.0.2-rc.0&quot;</span></div>
<div class="ln" style="left:1419.5px;top:751.90px">37</div>
<div class="code" style="left:1500px;top:751.90px">    <span style="color:#da70d6">}</span><span style="color:#cccccc">,</span></div>
<div class="ln" style="left:1419.5px;top:776.78px">38</div>
<div class="code" style="left:1500px;top:776.78px">    <span style="color:#9cdcfe">&quot;devDependencies&quot;</span><span style="color:#cccccc">:</span> <span style="color:#da70d6">{</span></div>
<div class="ln" style="left:1419.5px;top:801.67px">39</div>
<div class="code" style="left:1500px;top:801.67px">        <span style="color:#9cdcfe">&quot;storybook&quot;</span><span style="color:#cccccc">:</span> <span style="color:#ce9178">&quot;^8.1.10&quot;</span><span style="color:#cccccc">,</span></div>
<div class="ln" style="left:1419.5px;top:826.55px">40</div>
<div class="code" style="left:1500px;top:826.55px">        <span style="color:#9cdcfe">&quot;@storybook/react&quot;</span><span style="color:#cccccc">:</span> <span style="color:#ce9178">&quot;^8.1.10&quot;</span><span style="color:#cccccc">,</span></div>
<div class="ln" style="left:1419.5px;top:851.44px">41</div>
<div class="code" style="left:1500px;top:851.44px">        <span style="color:#9cdcfe">&quot;@storybook/react-vite&quot;</span><span style="color:#cccccc">:</span> <span style="color:#ce9178">&quot;^8.1.10&quot;</span><span style="color:#cccccc">,</span></div>
<div class="ln" style="left:1419.5px;top:876.32px">42</div>
<div class="code" style="left:1500px;top:876.32px">        <span style="color:#9cdcfe">&quot;@types/react&quot;</span><span style="color:#cccccc">:</span> <span style="color:#ce9178">&quot;^18.2.43&quot;</span><span style="color:#cccccc">,</span></div>
<div class="ln" style="left:1419.5px;top:901.21px">43</div>
<div class="code" style="left:1500px;top:901.21px">        <span style="color:#9cdcfe">&quot;@types/react-dom&quot;</span><span style="color:#cccccc">:</span> <span style="color:#ce9178">&quot;^18.2.17&quot;</span><span style="color:#cccccc">,</span></div>
<div class="ln" style="left:1419.5px;top:926.09px">44</div>
<div class="code" style="left:1500px;top:926.09px">        <span style="color:#9cdcfe">&quot;@typescript-eslint/eslint-plugin&quot;</span><span style="color:#cccccc">:</span> <span style="color:#ce9178">&quot;^6.14.0&quot;</span><span style="color:#cccccc">,</span></div>
<div class="ln" style="left:1419.5px;top:950.98px">45</div>
<div class="code" style="left:1500px;top:950.98px">        <span style="color:#9cdcfe">&quot;@typescript-eslint/parser&quot;</span><span style="color:#cccccc">:</span> <span style="color:#ce9178">&quot;^6.14.0&quot;</span><span style="color:#cccccc">,</span></div>
<div class="ln" style="left:1419.5px;top:975.86px">46</div>
<div class="code" style="left:1500px;top:975.86px">        <span style="color:#9cdcfe">&quot;@vitejs/plugin-react&quot;</span><span style="color:#cccccc">:</span> <span style="color:#ce9178">&quot;^4.2.1&quot;</span><span style="color:#cccccc">,</span></div>
<div class="ln" style="left:1419.5px;top:1000.75px">47</div>
<div class="code" style="left:1500px;top:1000.75px">        <span style="color:#9cdcfe">&quot;eslint&quot;</span><span style="color:#cccccc">:</span> <span style="color:#ce9178">&quot;^8.55.0&quot;</span><span style="color:#cccccc">,</span></div>
<div class="ln" style="left:1419.5px;top:1025.63px">48</div>
<div class="code" style="left:1500px;top:1025.63px">        <span style="color:#9cdcfe">&quot;eslint-plugin-react-hooks&quot;</span><span style="color:#cccccc">:</span> <span style="color:#ce9178">&quot;^4.6.0&quot;</span><span style="color:#cccccc">,</span></div>
<div class="ln" style="left:1419.5px;top:1050.52px">49</div>
<div class="code" style="left:1500px;top:1050.52px">        <span style="color:#9cdcfe">&quot;eslint-plugin-react-refresh&quot;</span><span style="color:#cccccc">:</span> <span style="color:#ce9178">&quot;^0.4.5&quot;</span><span style="color:#cccccc">,</span></div>
<div class="ln" style="left:1419.5px;top:1075.40px">50</div>
<div class="code" style="left:1500px;top:1075.40px">        <span style="color:#9cdcfe">&quot;eslint-plugin-storybook&quot;</span><span style="color:#cccccc">:</span> <span style="color:#ce9178">&quot;^0.8.0&quot;</span><span style="color:#cccccc">,</span></div>
<div class="ln" style="left:1419.5px;top:1100.29px">51</div>
<div class="code" style="left:1500px;top:1100.29px">        <span style="color:#9cdcfe">&quot;prettier&quot;</span><span style="color:#cccccc">:</span> <span style="color:#ce9178">&quot;3.3.1&quot;</span><span style="color:#cccccc">,</span></div>
<div class="ln" style="left:1419.5px;top:1125.17px">52</div>
<div class="code" style="left:1500px;top:1125.17px">        <span style="color:#9cdcfe">&quot;typescript&quot;</span><span style="color:#cccccc">:</span> <span style="color:#ce9178">&quot;^5.2.2&quot;</span><span style="color:#cccccc">,</span></div>
<div class="ln" style="left:1419.5px;top:1150.06px">53</div>
<div class="bg" style="left:1481px;top:1161px;width:13px;height:1.4px;background:#8b949e"></div>
<div class="bg" style="left:1486.8px;top:1155px;width:1.4px;height:13px;background:#8b949e"></div>
<div class="code" style="left:1500px;top:1150.06px">        <span style="color:#9cdcfe">&quot;vite&quot;</span><span style="color:#cccccc">:</span> <span style="color:#ce9178">&quot;^5.0.8&quot;</span><span style="color:#cccccc">,</span></div>
<div class="ln" style="left:1419.5px;top:1174.94px">54</div>
<div class="bg" style="left:1481px;top:1186px;width:13px;height:1.4px;background:#8b949e"></div>
<div class="bg" style="left:1486.8px;top:1180px;width:1.4px;height:13px;background:#8b949e"></div>
<div class="code" style="left:1500px;top:1174.94px">        <span style="color:#9cdcfe">&quot;@types/lodash-es&quot;</span><span style="color:#cccccc">:</span> <span style="color:#ce9178">&quot;^4.17.12&quot;</span></div>
<div class="ln" style="left:1419.5px;top:1199.83px">55</div>
<div class="code" style="left:1500px;top:1199.83px">    <span style="color:#da70d6">}</span></div>
<div class="ln" style="left:1419.5px;top:1224.71px">56</div>
<div class="code" style="left:1500px;top:1224.71px"><span style="color:#ffd700">}</span></div>
<div class="guide" style="left:1500.0px;top:80.00px;height:1144.71px;background:#404040"></div>
<div class="guide" style="left:1540.0px;top:104.89px;height:124.43px;background:#404040"></div>
<div class="guide" style="left:1540.0px;top:328.85px;height:423.05px;background:rgba(210,210,210,0.4)"></div>
<div class="guide" style="left:1540.0px;top:801.67px;height:398.16px;background:#404040"></div>
</div></div>
<div class="abs" style="left:1357px;top:80px;width:1px;height:1229px;background:rgba(0,0,0,0.3)"></div>
<div class="abs" style="left:1358px;top:80px;width:18px;height:3px;background:#5a5a5a"></div>
<div class="abs" style="left:1357px;top:189px;width:19px;height:644px;background:rgba(121,121,121,0.4)"></div>
<div class="abs" style="left:1376px;top:80px;width:48px;height:1229px;background:#1f1f1f"></div>
<div class="abs" style="left:1376px;top:80px;width:2px;height:1229px;background:#141414"></div>
<div class="abs" style="left:1418px;top:80px;width:6px;height:1229px;background:linear-gradient(90deg,rgba(0,0,0,0),rgba(0,0,0,0.45))"></div>
<div class="abs" style="left:1400px;top:378px;width:2px;height:373px;background:#474747"></div>
<div class="abs" style="left:1386px;top:540px;width:28px;height:49px;border-radius:5px;background:#39393e"></div>
<svg class="abs" style="left:1388px;top:543px" width="24" height="44" viewBox="0 0 24 44"><path d="M3.5 9 H20 M13.5 2.5 L20 9 L13.5 15.5" fill="none" stroke="#d0d0d0" stroke-width="1.4"/><path d="M11 24.5 V42 M2.5 33 H19.5" fill="none" stroke="#d0d0d0" stroke-width="1.5"/></svg>
<div class="abs" style="left:2243px;top:80px;width:1px;height:1229px;background:#151515"></div>
<div class="abs" style="left:2244px;top:333px;width:18px;height:2px;background:#a8a8a8"></div>
<div class="abs" style="left:2262px;top:80px;width:42px;height:1229px;background:#1f1f1f"></div>
<div class="abs" style="left:2262px;top:189px;width:42px;height:645px;background:#434343"></div>
<div class="abs" style="left:2262px;top:334px;width:21px;height:12px;background:#7a4545"></div>
<div class="abs" style="left:2283px;top:334px;width:21px;height:182px;background:#66714b"></div>
<div class="abs" style="left:2262px;top:709px;width:21px;height:13px;background:#7a4545"></div>
<div class="abs" style="left:2283px;top:709px;width:21px;height:25px;background:#66714b"></div>
<div class="abs" style="left:2262px;top:758px;width:21px;height:13px;background:#7a4545"></div>
<div class="code" style="left:1870px;top:378.8px;color:rgba(160,160,160,0.4);-webkit-text-stroke:0;width:392px;overflow:hidden">You, 18 seconds ago • Uncommitted changes</div>
<div class="abs" style="left:1500px;top:378px;width:762px;height:1px;background:rgba(255,255,255,0.07)"></div>
<div class="abs" style="left:1500px;top:402px;width:762px;height:1px;background:rgba(255,255,255,0.07)"></div>
<div class="abs" style="left:2302.5px;top:0px;width:1.5px;height:1309px;background:#3a3a3a"></div>
<div class="abs" style="left:1700px;top:304.5px;width:10px;height:24px;border:1px solid #8a8a8a"></div>
<div class="abs" style="left:1540px;top:753px;width:10px;height:24px;border:1px solid #8a8a8a"></div>
<div class="abs" style="left:589px;top:80px;width:1673px;height:6px;background:linear-gradient(rgba(0,0,0,0.35),rgba(0,0,0,0))"></div>
</body></html>
